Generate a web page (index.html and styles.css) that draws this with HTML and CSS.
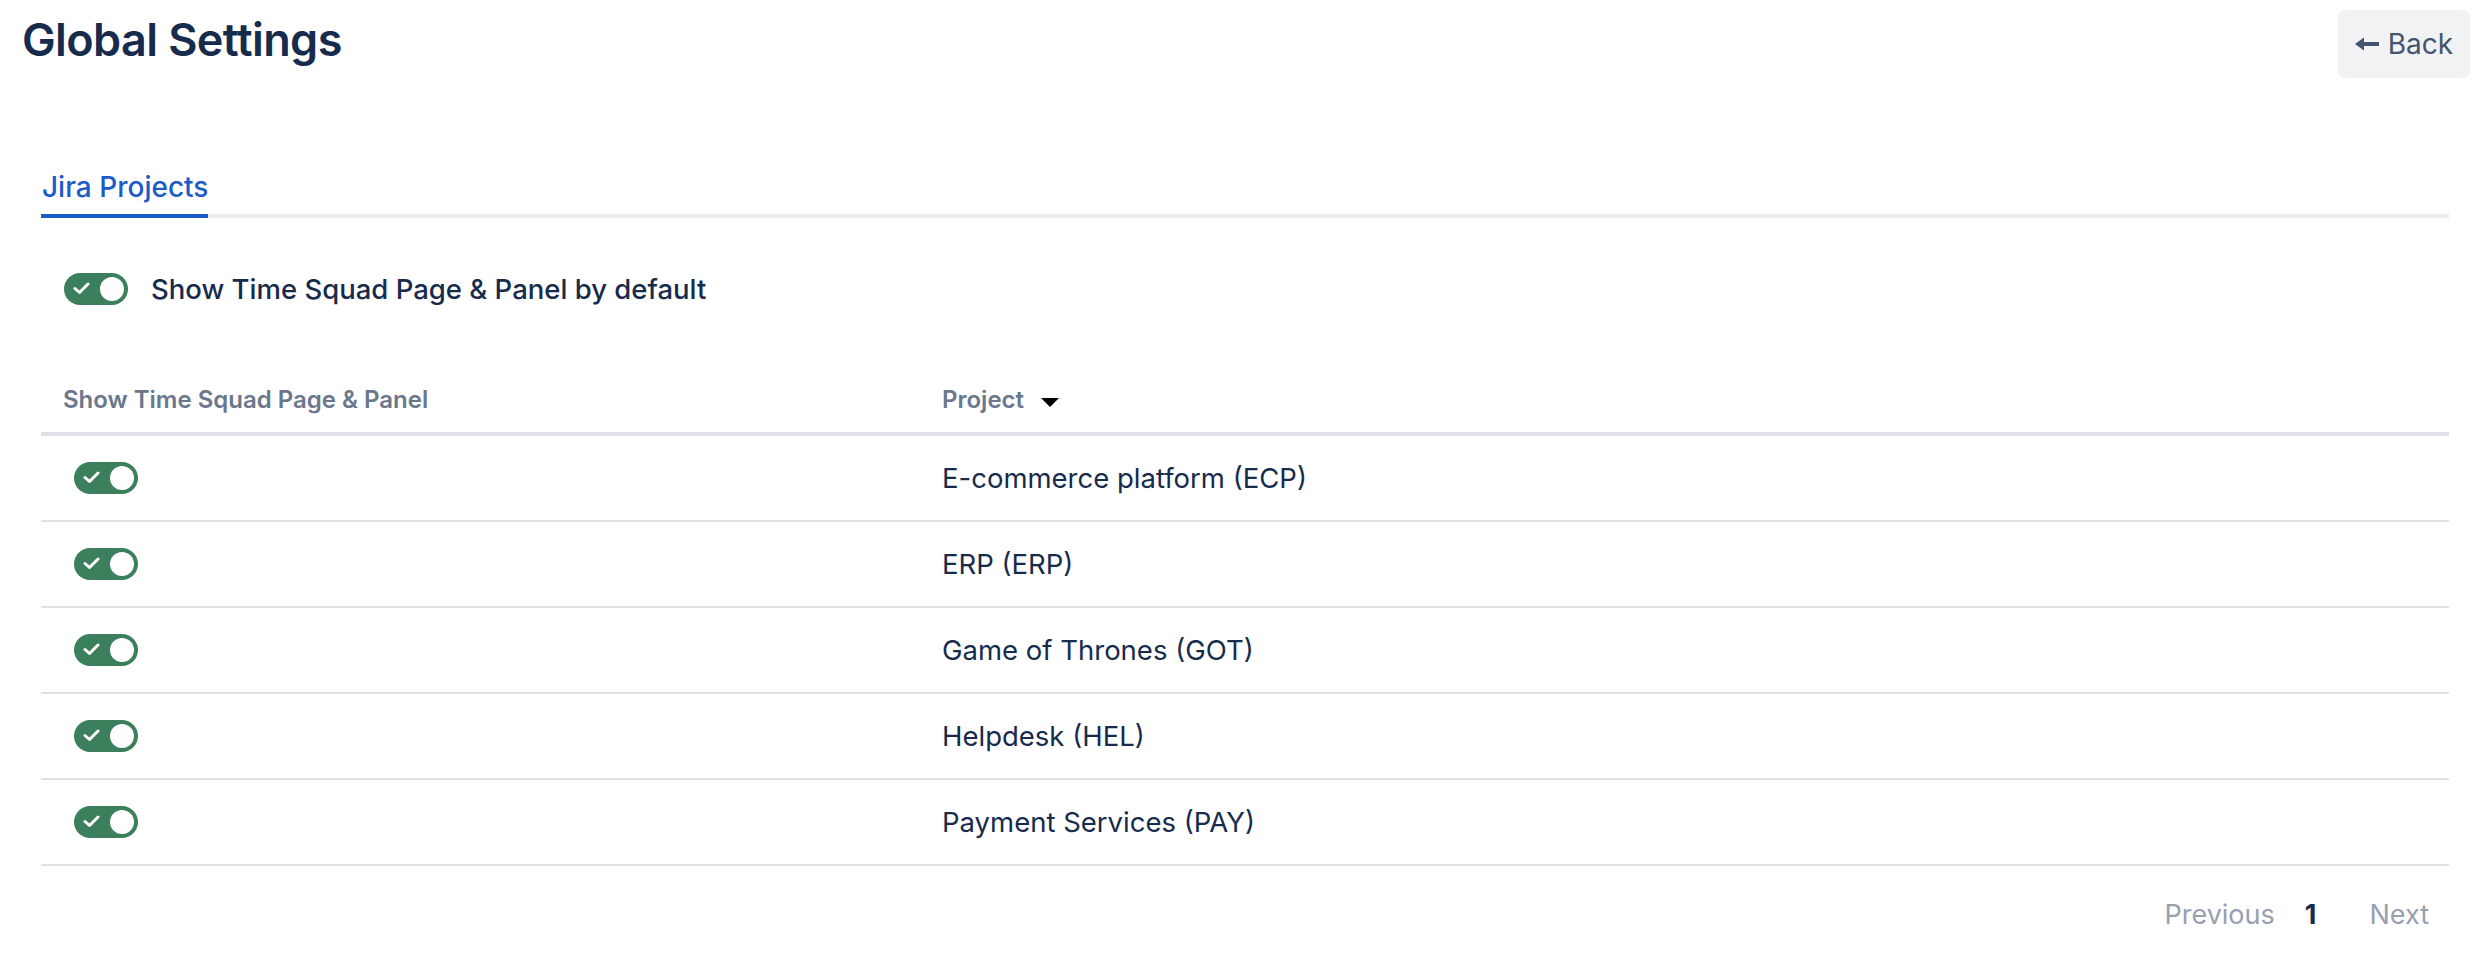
FILE: index.html
```html
<!DOCTYPE html>
<html lang="en">
<head>
<meta charset="utf-8">
<title>Global Settings</title>
<link rel="stylesheet" href="styles.css">
</head>
<body>
<header class="page-header">
  <h1 class="page-title">Global Settings</h1>
  <button class="back-btn" type="button">
    <svg class="back-icon" width="24" height="16" viewBox="0 0 24 16" aria-hidden="true">
      <path d="M0 8 L9 1.5 V6 H24 V10 H9 V14.5 Z" fill="currentColor"/>
    </svg>
    <span>Back</span>
  </button>
</header>

<main class="content">
  <nav class="tabs">
    <div class="tab tab-active">Jira Projects</div>
  </nav>

  <div class="default-row">
    <span class="toggle"><svg class="toggle-check" width="17" height="13" viewBox="0 0 17 13" aria-hidden="true"><path d="M2 6.5 L6.5 10.5 L15 2" fill="none" stroke="#fff" stroke-width="3" stroke-linecap="round" stroke-linejoin="round"/></svg><span class="toggle-knob"></span></span>
    <span class="default-label">Show Time Squad Page &amp; Panel by default</span>
  </div>

  <div class="table">
    <div class="thead">
      <div class="th">Show Time Squad Page &amp; Panel</div>
      <div class="th th-sort">Project <span class="sort-caret"></span></div>
    </div>
    <div class="tr">
      <div class="td td-toggle"><span class="toggle"><svg class="toggle-check" width="17" height="13" viewBox="0 0 17 13" aria-hidden="true"><path d="M2 6.5 L6.5 10.5 L15 2" fill="none" stroke="#fff" stroke-width="3" stroke-linecap="round" stroke-linejoin="round"/></svg><span class="toggle-knob"></span></span></div>
      <div class="td">E-commerce platform (ECP)</div>
    </div>
    <div class="tr">
      <div class="td td-toggle"><span class="toggle"><svg class="toggle-check" width="17" height="13" viewBox="0 0 17 13" aria-hidden="true"><path d="M2 6.5 L6.5 10.5 L15 2" fill="none" stroke="#fff" stroke-width="3" stroke-linecap="round" stroke-linejoin="round"/></svg><span class="toggle-knob"></span></span></div>
      <div class="td">ERP (ERP)</div>
    </div>
    <div class="tr">
      <div class="td td-toggle"><span class="toggle"><svg class="toggle-check" width="17" height="13" viewBox="0 0 17 13" aria-hidden="true"><path d="M2 6.5 L6.5 10.5 L15 2" fill="none" stroke="#fff" stroke-width="3" stroke-linecap="round" stroke-linejoin="round"/></svg><span class="toggle-knob"></span></span></div>
      <div class="td">Game of Thrones (GOT)</div>
    </div>
    <div class="tr">
      <div class="td td-toggle"><span class="toggle"><svg class="toggle-check" width="17" height="13" viewBox="0 0 17 13" aria-hidden="true"><path d="M2 6.5 L6.5 10.5 L15 2" fill="none" stroke="#fff" stroke-width="3" stroke-linecap="round" stroke-linejoin="round"/></svg><span class="toggle-knob"></span></span></div>
      <div class="td">Helpdesk (HEL)</div>
    </div>
    <div class="tr">
      <div class="td td-toggle"><span class="toggle"><svg class="toggle-check" width="17" height="13" viewBox="0 0 17 13" aria-hidden="true"><path d="M2 6.5 L6.5 10.5 L15 2" fill="none" stroke="#fff" stroke-width="3" stroke-linecap="round" stroke-linejoin="round"/></svg><span class="toggle-knob"></span></span></div>
      <div class="td">Payment Services (PAY)</div>
    </div>
  </div>

  <nav class="pagination">
    <span class="page-btn page-disabled">Previous</span>
    <span class="page-btn page-current">1</span>
    <span class="page-btn page-disabled page-next">Next</span>
  </nav>
</main>
</body>
</html>
```

FILE: styles.css
```css
* { box-sizing: border-box; }

html, body {
  margin: 0;
  padding: 0;
  background: #ffffff;
}

body {
  font-family: Inter, "Noto Sans", "Liberation Sans", sans-serif;
  color: #172b4d;
}

.page-header {
  display: flex;
  justify-content: space-between;
  align-items: flex-start;
  padding: 0 20px 0 22px;
}

.page-title {
  margin: 12px 0 0 0;
  font-size: 45px;
  line-height: 55px;
  font-weight: 600;
  letter-spacing: -0.6px;
  color: #172b4d;
}

.back-btn {
  margin-top: 10px;
  width: 132px;
  height: 68px;
  display: flex;
  align-items: center;
  justify-content: center;
  gap: 9px;
  border: 0;
  border-radius: 7px;
  background: #f1f2f4;
  color: #44546f;
  font-family: inherit;
  font-size: 28px;
  font-weight: 400;
  padding: 0;
}

.back-icon { display: block; }

.content {
  padding: 0 41px;
}

.tabs {
  margin-top: 92px;
  display: flex;
  border-bottom: 4px solid #ebecf0;
}

.tab {
  font-size: 28px;
  line-height: 34px;
  font-weight: 500;
  padding: 0 0 10px 1px;
  margin-bottom: -4px;
}

.tab-active {
  color: #1d5bc8;
  border-bottom: 4px solid #1d5bc8;
}

.default-row {
  display: flex;
  align-items: center;
  gap: 23px;
  margin-top: 54px;
  padding-left: 23px;
}

.default-label {
  font-size: 27.5px;
  font-weight: 500;
  color: #172b4d;
}

.toggle {
  position: relative;
  display: inline-block;
  width: 64px;
  height: 32px;
  border-radius: 16px;
  background: #3b7f5d;
  flex: none;
}

.toggle-check {
  position: absolute;
  left: 9px;
  top: 9px;
}

.toggle-knob {
  position: absolute;
  left: 36px;
  top: 4px;
  width: 24px;
  height: 24px;
  border-radius: 50%;
  background: #ffffff;
}

.table {
  margin-top: 80px;
}

.thead, .tr {
  display: grid;
  grid-template-columns: 879px 1fr;
}

.thead {
  border-bottom: 4px solid #dfe1e6;
}

.th {
  padding: 0 22px 18px 22px;
  font-size: 24px;
  line-height: 28px;
  font-weight: 600;
  color: #6b778c;
  display: flex;
  align-items: center;
}

.sort-caret {
  display: inline-block;
  width: 0;
  height: 0;
  margin-left: 17px;
  margin-top: 4px;
  border-left: 9.5px solid transparent;
  border-right: 9.5px solid transparent;
  border-top: 9px solid #000000;
}

.tr {
  height: 86px;
  border-bottom: 2px solid #dfe1e6;
}

.td {
  display: flex;
  align-items: center;
  padding: 0 22px;
  font-size: 27.5px;
  color: #172b4d;
}

.td-toggle {
  padding-left: 33px;
}

.pagination {
  display: flex;
  justify-content: flex-end;
  margin-top: 32px;
  padding-right: 5px;
}

.page-btn {
  font-size: 27px;
  line-height: 34px;
  padding: 0 15px;
}

.page-disabled { color: #97a0af; }

.page-current {
  color: #172b4d;
  font-weight: 700;
}

.page-next { margin-left: 23px; }
```
